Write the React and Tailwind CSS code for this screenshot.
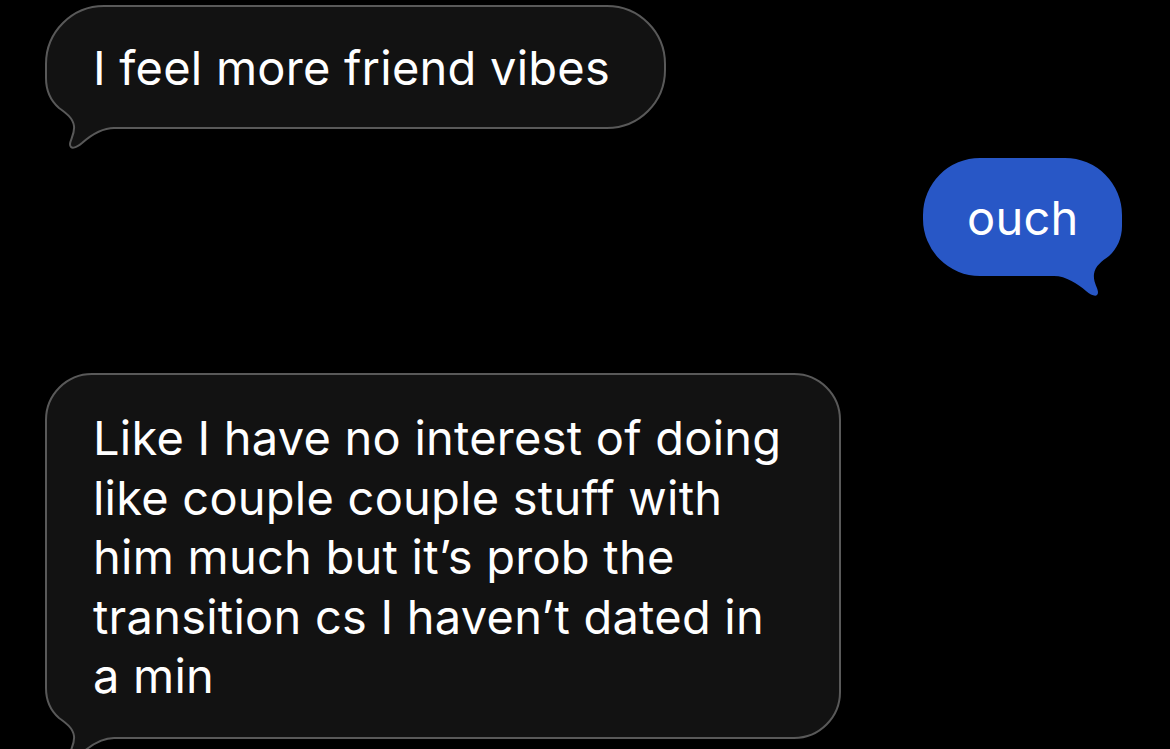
import React from 'react';

// outline of a message bubble with the tail at the bottom-left corner
function tailPath(W, H, R) {
  return `M ${R} 0 H ${W - R} A ${R} ${R} 0 0 1 ${W} ${R} V ${H - R} A ${R} ${R} 0 0 1 ${W - R} ${H} H 68 C 56 ${H} 44 ${H + 8} 36 ${H + 15} C 30 ${H + 20} 24 ${H + 22} 24 ${H + 16} C 24 ${H + 12} 29 ${H + 6} 28 ${H - 2} C 27 ${H - 10} 20 ${H - 15} 13 ${H - 20} C 5 ${H - 27} 0 ${H - 38} 0 ${H - 50} V ${R} A ${R} ${R} 0 0 1 ${R} 0 Z`;
}

function BubbleShape({ w, h, r, fill, stroke, mirror }) {
  return (
    <svg
      className="absolute left-0 top-0 overflow-visible pointer-events-none"
      width={w}
      height={h}
      viewBox={`0 0 ${w} ${h}`}
    >
      <g transform={mirror ? `translate(${w} 0) scale(-1 1)` : undefined}>
        <path d={tailPath(w, h, r)} fill={fill} stroke={stroke || 'none'} strokeWidth={stroke ? 2 : 0} />
      </g>
    </svg>
  );
}

const lines = [
  'Like I have no interest of doing',
  'like couple couple stuff with',
  'him much but it’s prob the',
  'transition cs I haven’t dated in',
  'a min',
];

export default function App() {
  return (
    <div className="w-[1170px] h-[749px] overflow-hidden bg-black font-['Inter','Liberation_Sans',sans-serif] text-white">
      <div className="flex flex-col pt-[6px] px-[46px]">
        {/* received */}
        <div className="relative w-[619px] h-[122px]">
          <BubbleShape w={619} h={122} r={58} fill="#121212" stroke="#595959" />
          <div className="relative flex h-full items-center pl-[47px] text-[47px] leading-[59px] tracking-[0.005em]">
            I feel more friend vibes
          </div>
        </div>

        {/* sent */}
        <div className="relative mt-[30px] self-end mr-[2px] w-[199px] h-[118px]">
          <BubbleShape w={199} h={118} r={57} fill="#2857c6" mirror />
          <div className="relative flex h-full items-center pl-[44px] text-[47px] leading-[59px] tracking-[0.005em]">
            ouch
          </div>
        </div>

        {/* received */}
        <div className="relative mt-[98px] w-[794px] h-[364px]">
          <BubbleShape w={794} h={364} r={46} fill="#121212" stroke="#595959" />
          <p className="relative pl-[47px] pt-[34px] text-[47px] leading-[59.5px] tracking-[0.005em] whitespace-nowrap">
            {lines.map((l, i) => (
              <span key={i} className="block">{l}</span>
            ))}
          </p>
        </div>
      </div>
    </div>
  );
}
